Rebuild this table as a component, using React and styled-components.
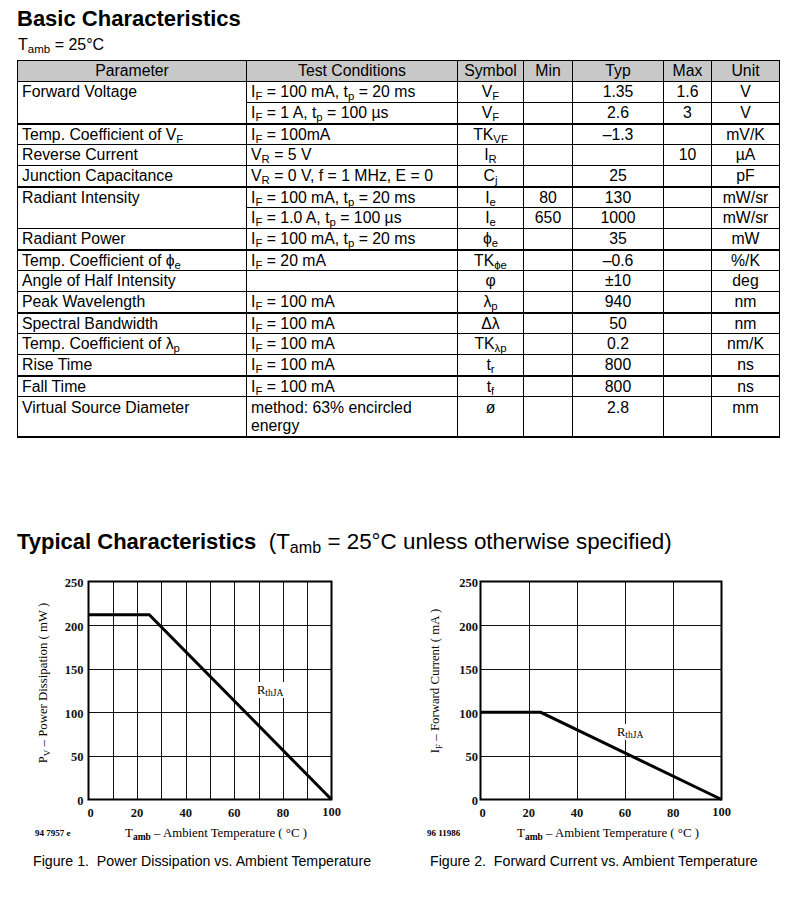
import React from 'react';
import styled, { createGlobalStyle } from 'styled-components';

const GlobalStyle = createGlobalStyle`
  body {
    margin: 0;
    background: #fff;
    color: #000;
    font-family: 'Liberation Sans', Arial, sans-serif;
  }
`;

const Page = styled.div`
  width: 800px;
  padding-left: 17px;
  box-sizing: border-box;
`;

const Heading = styled.h1`
  margin: ${p => p.$top}px 0 0 0;
  font-size: 22px;
  line-height: 26px;
  font-weight: bold;
`;

const Light = styled.span`
  font-weight: normal;
  font-size: 22.4px;
  white-space: pre;
`;

const Sub = styled.sub`
  font-size: 0.72em;
  vertical-align: -0.27em;
  line-height: 0;
`;

const Condition = styled.div`
  margin-top: 4px;
  font-size: 16px;
  line-height: 18px;
  padding-left: 1px;
`;

const Table = styled.table`
  margin-top: 6px;
  width: 762px;
  border-collapse: collapse;
  table-layout: fixed;
  font-size: 15.8px;
  border: 1px solid #000;
  border-bottom-width: 2px;
`;

const Th = styled.th`
  background: #c8c8c8;
  font-weight: normal;
  height: 20px;
  padding: 0;
  line-height: 20px;
  border: 1px solid #000;
  text-align: center;
`;

const Td = styled.td`
  border: 1px solid #000;
  border-top-width: ${p => (p.$thick ? 2 : 1)}px;
  padding: ${p => (p.$tall ? '2px 4px 0 4px' : '0 4px')};
  height: ${p => (p.$tall ? 37 : p.$thick ? 19 : 20)}px;
  line-height: ${p => (p.$tall ? 18 : p.$thick ? 19 : 20)}px;
  vertical-align: top;
  text-align: ${p => (p.$left ? 'left' : 'center')};
  white-space: nowrap;
`;

const FigureRow = styled.div`
  margin-top: 14px;
  margin-left: 3px;
  display: grid;
  grid-template-columns: 370px 370px;
  column-gap: 20px;
`;

const Figure = styled.div`
  display: flex;
  flex-direction: column;
`;

const Caption = styled.div`
  margin-top: 9px;
  padding-left: ${p => p.$indent}px;
  font-size: 14.2px;
  line-height: 16px;
  white-space: pre;
`;

const IF = <>I<Sub>F</Sub></>;
const TP = <>t<Sub>p</Sub></>;

const rows = [
  { param: 'Forward Voltage', span: 2, cond: <>{IF} = 100 mA, {TP} = 20 ms</>, sym: <>V<Sub>F</Sub></>, typ: '1.35', max: '1.6', unit: 'V' },
  { cond: <>{IF} = 1 A, {TP} = 100 µs</>, sym: <>V<Sub>F</Sub></>, typ: '2.6', max: '3', unit: 'V' },
  { thick: true, param: <>Temp. Coefficient of V<Sub>F</Sub></>, cond: <>{IF} = 100mA</>, sym: <>TK<Sub>VF</Sub></>, typ: '–1.3', unit: 'mV/K' },
  { param: 'Reverse Current', cond: <>V<Sub>R</Sub> = 5 V</>, sym: <>I<Sub>R</Sub></>, max: '10', unit: 'µA' },
  { param: 'Junction Capacitance', cond: <>V<Sub>R</Sub> = 0 V, f = 1 MHz, E = 0</>, sym: <>C<Sub>j</Sub></>, typ: '25', unit: 'pF' },
  { thick: true, param: 'Radiant Intensity', span: 2, cond: <>{IF} = 100 mA, {TP} = 20 ms</>, sym: <>I<Sub>e</Sub></>, min: '80', typ: '130', unit: 'mW/sr' },
  { cond: <>{IF} = 1.0 A, {TP} = 100 µs</>, sym: <>I<Sub>e</Sub></>, min: '650', typ: '1000', unit: 'mW/sr' },
  { param: 'Radiant Power', cond: <>{IF} = 100 mA, {TP} = 20 ms</>, sym: <>ϕ<Sub>e</Sub></>, typ: '35', unit: 'mW' },
  { thick: true, param: <>Temp. Coefficient of ϕ<Sub>e</Sub></>, cond: <>{IF} = 20 mA</>, sym: <>TK<Sub>ϕe</Sub></>, typ: '–0.6', unit: '%/K' },
  { param: 'Angle of Half Intensity', cond: '', sym: 'φ', typ: '±10', unit: 'deg' },
  { param: 'Peak Wavelength', cond: <>{IF} = 100 mA</>, sym: <>λ<Sub>p</Sub></>, typ: '940', unit: 'nm' },
  { thick: true, param: 'Spectral Bandwidth', cond: <>{IF} = 100 mA</>, sym: 'Δλ', typ: '50', unit: 'nm' },
  { param: <>Temp. Coefficient of λ<Sub>p</Sub></>, cond: <>{IF} = 100 mA</>, sym: <>TK<Sub>λp</Sub></>, typ: '0.2', unit: 'nm/K' },
  { param: 'Rise Time', cond: <>{IF} = 100 mA</>, sym: <>t<Sub>r</Sub></>, typ: '800', unit: 'ns' },
  { thick: true, param: 'Fall Time', cond: <>{IF} = 100 mA</>, sym: <>t<Sub>f</Sub></>, typ: '800', unit: 'ns' },
  { tall: true, param: 'Virtual Source Diameter', cond: <>method: 63% encircled<br />energy</>, sym: 'ø', typ: '2.8', unit: 'mm' },
];

const charts = [
  {
    left: 68.5, right: 311.5, step: 10, tickGap: 5,
    points: [[0, 212], [25, 212], [100, 0]],
    label: { x: 237, y: 125 },
    code: '94 7957 e', codeX: 15,
    yTitle: { x: 27, y: 114, main: 'P', sub: 'V', rest: ' – Power Dissipation ( mW )' },
    titleX: 196,
    caption: 'Figure 1.  Power Dissipation vs. Ambient Temperature', indent: 13,
  },
  {
    left: 70.5, right: 311.5, step: 20, tickGap: 2.5,
    points: [[0, 100], [25, 100], [100, 0]],
    label: { x: 207, y: 167 },
    code: '96 11986', codeX: 17,
    yTitle: { x: 28.5, y: 112, main: 'I', sub: 'F', rest: ' – Forward Current ( mA )' },
    titleX: 198,
    caption: 'Figure 2.  Forward Current vs. Ambient Temperature', indent: 20,
  },
];

const SERIF = "'Liberation Serif', 'Times New Roman', serif";

function Chart({ c }) {
  const top = 12.5;
  const bottom = 230.5;
  const sx = t => c.left + (t / 100) * (c.right - c.left);
  const sy = v => bottom - (v / 250) * (bottom - top);
  const xs = [];
  for (let t = c.step; t < 100; t += c.step) xs.push(t);
  const ys = [50, 100, 150, 200];
  const ticksX = [0, 20, 40, 60, 80, 100];
  const ticksY = [0, 50, 100, 150, 200, 250];

  return (
    <svg width="370" height="275" viewBox="0 0 370 275" fontFamily={SERIF}>
      <g stroke="#111" strokeWidth="1">
        {xs.map(t => (
          <line key={t} x1={Math.round(sx(t)) + 0.5} x2={Math.round(sx(t)) + 0.5} y1={top} y2={bottom} />
        ))}
        {ys.map(v => (
          <line key={v} x1={c.left} x2={c.right} y1={Math.round(sy(v)) + 0.5} y2={Math.round(sy(v)) + 0.5} />
        ))}
      </g>
      <rect x={c.label.x - 1} y={c.label.y - 12} width="31" height="16" fill="#fff" />
      <text x={c.label.x} y={c.label.y} fontSize="12.5">
        R<tspan fontSize="9.5" dy="2">thJA</tspan>
      </text>
      <polyline
        points={c.points.map(([t, v]) => `${sx(t)},${sy(v)}`).join(' ')}
        fill="none"
        stroke="#000"
        strokeWidth="3"
      />
      <rect x={c.left} y={top} width={c.right - c.left} height={bottom - top} fill="none" stroke="#000" strokeWidth="2" />
      <g fontSize="12.5" fontWeight="bold" fill="#111">
        {ticksY.map(v => (
          <text key={v} x={c.left - c.tickGap} y={sy(v) + 5.5} textAnchor="end">{v}</text>
        ))}
        {ticksX.map(t => (
          <text key={t} x={sx(t) + (t === 0 ? 2 : 0)} y={t === 100 ? 246.5 : 248} textAnchor="middle">{t}</text>
        ))}
      </g>
      <text x={c.codeX} y="267" fontSize="9" fontWeight="bold">{c.code}</text>
      <text x={c.titleX} y="268" fontSize="12.8" textAnchor="middle">
        T<tspan fontSize="9.5" fontWeight="bold" dy="3">amb</tspan><tspan dy="-3"> – Ambient Temperature ( °C )</tspan>
      </text>
      <text transform={`translate(${c.yTitle.x} ${c.yTitle.y}) rotate(-90)`} fontSize="12.8" textAnchor="middle">
        {c.yTitle.main}<tspan fontSize="9" dy="3">{c.yTitle.sub}</tspan><tspan dy="-3">{c.yTitle.rest}</tspan>
      </text>
    </svg>
  );
}

export default function App() {
  return (
    <>
      <GlobalStyle />
      <Page>
        <Heading $top={6}>Basic Characteristics</Heading>
        <Condition>T<Sub>amb</Sub> = 25°C</Condition>
        <Table>
          <colgroup>
            <col style={{ width: 229 }} />
            <col style={{ width: 211 }} />
            <col style={{ width: 66 }} />
            <col style={{ width: 49 }} />
            <col style={{ width: 91 }} />
            <col style={{ width: 48 }} />
            <col style={{ width: 68 }} />
          </colgroup>
          <thead>
            <tr>
              <Th>Parameter</Th>
              <Th>Test Conditions</Th>
              <Th>Symbol</Th>
              <Th>Min</Th>
              <Th>Typ</Th>
              <Th>Max</Th>
              <Th>Unit</Th>
            </tr>
          </thead>
          <tbody>
            {rows.map((r, i) => (
              <tr key={i}>
                {r.param !== undefined && (
                  <Td $left $thick={r.thick} $tall={r.tall} rowSpan={r.span || 1}>{r.param}</Td>
                )}
                <Td $left $thick={r.thick} $tall={r.tall}>{r.cond}</Td>
                <Td $thick={r.thick} $tall={r.tall}>{r.sym}</Td>
                <Td $thick={r.thick} $tall={r.tall}>{r.min}</Td>
                <Td $thick={r.thick} $tall={r.tall}>{r.typ}</Td>
                <Td $thick={r.thick} $tall={r.tall}>{r.max}</Td>
                <Td $thick={r.thick} $tall={r.tall}>{r.unit}</Td>
              </tr>
            ))}
          </tbody>
        </Table>
        <Heading $top={91}>
          Typical Characteristics<Light>  (T<Sub>amb</Sub> = 25°C unless otherwise specified)</Light>
        </Heading>
        <FigureRow>
          {charts.map((c, i) => (
            <Figure key={i}>
              <Chart c={c} />
              <Caption $indent={c.indent}>{c.caption}</Caption>
            </Figure>
          ))}
        </FigureRow>
      </Page>
    </>
  );
}
